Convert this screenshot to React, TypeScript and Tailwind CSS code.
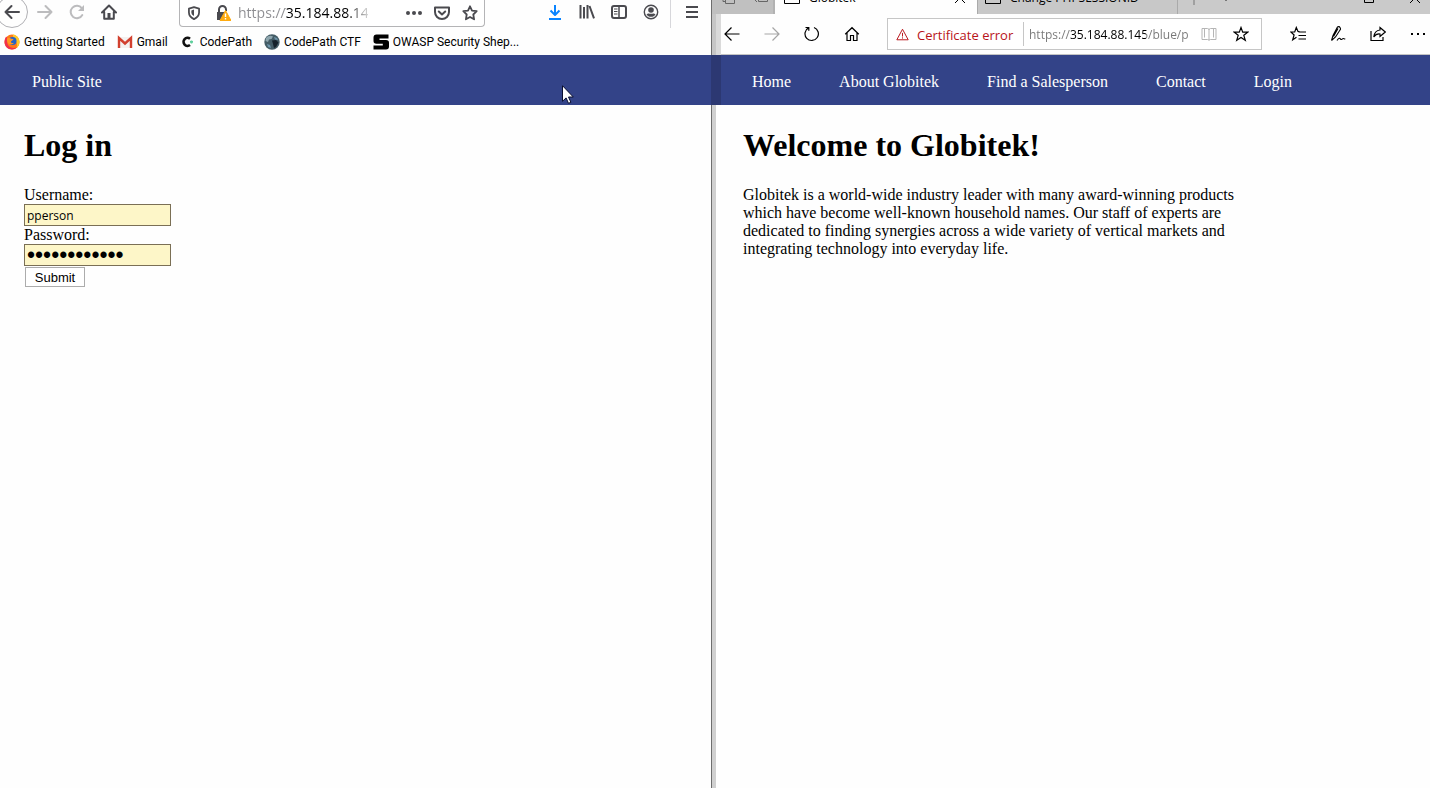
import type { ReactNode } from "react";

function Svg({ size = 16, className = "", children }: { size?: number; className?: string; children: ReactNode }) {
  return (
    <svg
      width={size}
      height={size}
      viewBox="0 0 16 16"
      fill="none"
      stroke="currentColor"
      aria-hidden="true"
      className={`shrink-0 ${className}`}
    >
      {children}
    </svg>
  );
}

function ToolButton({ label, className = "", children }: { label: string; className?: string; children: ReactNode }) {
  return (
    <button type="button" aria-label={label} className={`flex shrink-0 items-center justify-center ${className}`}>
      {children}
    </button>
  );
}

function FirefoxToolbar() {
  const tool = "h-6 w-8";
  return (
    <div className="flex h-7 items-start overflow-hidden text-[#4a4a4f]">
      <button
        type="button"
        aria-label="Back"
        className="-mt-1 -ml-1 mr-px flex h-8 w-8 shrink-0 items-center justify-center rounded-full border border-[#b0b0b4]"
      >
        <Svg>
          <path d="M15 8H1.5M7.5 2 1.5 8l6 6" strokeWidth="2" strokeLinecap="round" strokeLinejoin="round" />
        </Svg>
      </button>
      <ToolButton label="Forward" className={`${tool} text-[#bcbcbe]`}>
        <Svg>
          <path d="M1 8h13.5M8.500 2l6 6-6 6" strokeWidth="2" strokeLinecap="round" strokeLinejoin="round" />
        </Svg>
      </ToolButton>
      <ToolButton label="Reload" className={`${tool} text-[#bcbcbe]`}>
        <Svg>
          <path d="M13.300 11A6.200 6.200 0 1 1 12.800 4.200" strokeWidth="2" strokeLinecap="round" />
          <path d="M15 1v6H9z" fill="currentColor" stroke="none" />
        </Svg>
      </ToolButton>
      <ToolButton label="Home" className={tool}>
        <Svg>
          <path d="M1 8.500 8 1.500l7 7M3.200 8v6.700h9.600V8" strokeWidth="2" strokeLinecap="round" strokeLinejoin="round" />
          <path d="M6.500 9h3v6h-3z" fill="currentColor" stroke="none" />
        </Svg>
      </ToolButton>

      <div className="mx-[54px] flex h-[27px] min-w-0 flex-1 items-center rounded-b-sm border-x border-b border-[#b4b4b6] bg-white pb-px">
        <ToolButton label="Tracking protection" className="h-6 w-7">
          <Svg size={14}>
            <path d="M8 1.200 13.800 3v4.500c0 3.400-2.600 6-5.800 7.500-3.200-1.500-5.800-4.100-5.800-7.500V3z" strokeWidth="2" strokeLinejoin="round" />
            <path d="M8 4v7.500C6 10.500 5 9 5 7.500V5z" fill="currentColor" stroke="none" />
          </Svg>
        </ToolButton>
        <ToolButton label="Connection is not secure" className="h-6 w-[30px]">
          <Svg>
            <path d="M4 7V4.500a3.500 3.500 0 0 1 7 0V6" strokeWidth="2" />
            <path d="M2 7h8l-4 8H2z" fill="currentColor" stroke="none" />
            <path d="M10.500 5.500 16 15.500H5z" fill="#ffab0f" stroke="#ffab0f" strokeLinejoin="round" />
            <path d="M10.500 8.500v3.500M10.500 13v1.400" stroke="#fff" strokeWidth="1.400" />
          </Svg>
        </ToolButton>
        <input
          aria-label="Address"
          defaultValue="https://35.184.88.145"
          className="h-5 w-[130px] min-w-0 bg-[linear-gradient(to_right,#8c8c90_47px,#000_47px,#000_108px,transparent_134px)] bg-clip-text text-[14px] leading-5 text-transparent outline-none"
        />
        <div className="ml-auto flex">
          <ToolButton label="Page actions" className="h-6 w-7">
            <Svg>
              <g fill="currentColor" stroke="none">
                <circle cx="2" cy="8" r="2" />
                <circle cx="8" cy="8" r="2" />
                <circle cx="14" cy="8" r="2" />
              </g>
            </Svg>
          </ToolButton>
          <ToolButton label="Save to Pocket" className="h-6 w-7">
            <Svg>
              <path d="M1 2.500h14V7a7 7 0 0 1-14 0z" strokeWidth="2" strokeLinejoin="round" />
              <path d="m4.800 6.500 3.200 3 3.200-3" strokeWidth="2" strokeLinecap="round" strokeLinejoin="round" />
            </Svg>
          </ToolButton>
          <ToolButton label="Bookmark this page" className="h-6 w-7">
            <Svg>
              <path d="m8 1.300 2 4.300 4.700.6-3.400 3.300.8 4.800L8 12l-4.100 2.300.8-4.800L1.300 6.200 6 5.600z" strokeWidth="1.800" strokeLinejoin="round" />
            </Svg>
          </ToolButton>
        </div>
      </div>

      <ToolButton label="Downloads" className={`${tool} text-[#0a84ff]`}>
        <Svg>
          <path d="M8 1v10M3.500 6.500 8 11l4.500-4.500M2 15h12" strokeWidth="2" strokeLinejoin="round" />
        </Svg>
      </ToolButton>
      <ToolButton label="Library" className={tool}>
        <Svg>
          <path d="M1.500 1v13.500M5 3v11.500M8.500 1v13.500M10.500 2l4.500 12.300" strokeWidth="2" />
        </Svg>
      </ToolButton>
      <ToolButton label="Sidebars" className={tool}>
        <Svg>
          <rect x="1" y="2" width="14" height="12" rx="2" strokeWidth="2" />
          <path d="M8 2v12" strokeWidth="1.500" />
          <path d="M3 5h3.500M3 7.500h3.500M3 10h3.500" strokeWidth="1" />
        </Svg>
      </ToolButton>
      <ToolButton label="Account" className={tool}>
        <Svg>
          <circle cx="8" cy="8" r="6.700" strokeWidth="1.400" />
          <circle cx="8" cy="6" r="2.800" fill="currentColor" stroke="none" />
          <path d="M3.500 10.200c2-1.400 2.300-.5 4.500-.5s2.500-.9 4.500.5C11.500 12 10 12.800 8 12.800s-3.500-.8-4.500-2.600z" fill="currentColor" stroke="none" />
        </Svg>
      </ToolButton>
      <div className="mr-[5px] ml-[3px] h-7 w-px shrink-0 bg-[#d7d7db]" />
      <ToolButton label="Open menu" className={`${tool} mr-[3px]`}>
        <Svg>
          <path d="M2 3h12M2 8h12M2 13h12" strokeWidth="2" />
        </Svg>
      </ToolButton>
    </div>
  );
}

function FirefoxMark() {
  return (
    <Svg>
      <g stroke="none">
        <circle cx="8" cy="8" r="7.500" fill="#ff7a18" />
        <path d="M9 .6c4 .6 6.500 3.600 6.500 7.400 0 2.600-1.200 4.700-3 6 1-3.500.5-6-1.500-8S9 3 9 .6z" fill="#ffc928" />
        <path d="M.5 8c0 4 3 7.500 7.500 7.500 2 0 3.800-.8 5-2-4 1-7.500.2-9-2.500C2.800 8.900 3 6.500 3.500 4L2 2.800C1 4.500.5 6 .5 8z" fill="#f0304c" />
        <circle cx="8.500" cy="7" r="4" fill="#2463c9" />
        <path d="M3 4.500c1.500-1 3-.8 4 .2L9.500 5C9 6.500 7.500 6.500 7 7.500s1 2 3 1.300c-1 2-4.500 2.500-6 .2S3 5.500 3 4.500z" fill="#ff9820" />
      </g>
    </Svg>
  );
}

function GmailMark() {
  return (
    <Svg>
      <path d="M1 3h14v11H1z" fill="#f4f1f0" stroke="none" />
      <path d="M2 14V4l6 5.500L14 4v10" stroke="#d2402f" strokeWidth="2.400" />
    </Svg>
  );
}

function CodePathMark() {
  return (
    <Svg>
      <path d="M10 4.700A4 4 0 1 0 10 11" stroke="#111" strokeWidth="2.600" />
      <path d="M10 7.900h3M11.500 6.400v3" stroke="#5fcf9c" strokeWidth="1.600" />
    </Svg>
  );
}

function GlobeMark() {
  return (
    <Svg>
      <g stroke="none">
        <circle cx="8" cy="8" r="7.700" fill="#445c66" />
        <path d="M2 4C4 1.500 7 1 9 2.500L7.500 5 5 5.500 4 8 1.500 7z" fill="#8fa6ae" />
        <path d="M8 6.500 12 6l2.500 2.500L12 13l-2 1-1-4z" fill="#16222b" />
        <path d="m10 3 3 1 1 2-3-.5zM3 10l3 1 1 3-3-1z" fill="#6f96ac" />
      </g>
    </Svg>
  );
}

function ShepherdMark() {
  return (
    <Svg>
      <path d="M15.500 .5v4H6.500v1.600h6.500c2 0 3 .9 3 2.700v3.700c0 2-1 3-3 3H.5v-4h9.300V9.700H3.500c-2 0-3-.9-3-2.700V3.500c0-2 1-3 3-3z" fill="#000" stroke="none" />
    </Svg>
  );
}

const bookmarks = [
  { label: "Getting Started", mark: <FirefoxMark /> },
  { label: "Gmail", mark: <GmailMark /> },
  { label: "CodePath", mark: <CodePathMark /> },
  { label: "CodePath CTF", mark: <GlobeMark /> },
  { label: "OWASP Security Shep...", mark: <ShepherdMark /> },
];

function BookmarksBar() {
  return (
    <div className="flex h-[27px] items-center gap-3 overflow-hidden pt-px pl-1 font-['Roboto',sans-serif] text-[12px] leading-4 whitespace-nowrap text-black">
      {bookmarks.map((b) => (
        <a key={b.label} href="#" className="flex items-center gap-1">
          {b.mark}
          <span>{b.label}</span>
        </a>
      ))}
    </div>
  );
}

function LoginWindow() {
  return (
    <section className="relative flex min-w-0 flex-col bg-[#fefefe]">
      <FirefoxToolbar />
      <BookmarksBar />
      <nav className="h-[50px] bg-[#334388] pt-[18px] pl-8 font-['Liberation_Serif',serif] text-[16px] leading-[18px] text-white">
        <a href="#">Public Site</a>
      </nav>
      <main className="px-6 pt-[22px] font-['Liberation_Serif',serif] text-[16px] leading-[18px] text-black">
        <h1 className="mb-[23px] text-[32px] leading-9 font-bold">Log in</h1>
        <form className="flex flex-col items-start" onSubmit={(e) => e.preventDefault()}>
          <label htmlFor="username">Username:</label>
          <input
            id="username"
            defaultValue="pperson"
            className="h-[22px] w-[147px] border border-[#7a6f55] bg-[#fdf6c8] px-0.5 font-['Open_Sans',sans-serif] text-[12px]"
          />
          <label htmlFor="password">Password:</label>
          <input
            id="password"
            type="password"
            defaultValue="globitekuser"
            className="h-[22px] w-[147px] border border-[#7a6f55] bg-[#fdf6c8] px-0.5 font-['Liberation_Sans',sans-serif] text-[23px] leading-5"
          />
          <button
            type="submit"
            className="mt-px ml-px h-5 w-[60px] border border-[#acacac] bg-white pt-px font-['Liberation_Sans',sans-serif] text-[13px] leading-[18px]"
          >
            Submit
          </button>
        </form>
      </main>
      <svg width="12" height="19" viewBox="0 0 12 19" aria-hidden="true" className="absolute top-[85px] left-[562px]">
        <path d="M.5.7v15.600l3.600-3.400 2.400 5.400 2.400-1-2.400-5.300h4.800z" fill="#fff" stroke="#0b1030" />
      </svg>
    </section>
  );
}

function TabStrip() {
  return (
    <div className="flex h-[14px] items-end overflow-hidden bg-[#cacaca] text-[12px] leading-4 text-black">
      <div className="flex h-8 w-[63px] shrink-0 items-center gap-[17px] border-r-2 border-[#b2b2b2] bg-[#c0c0c0] pl-2 text-[#666]">
        <Svg>
          <path d="M3 3v8.500h2M5.500 5h9v8.500h-9z" />
        </Svg>
        <Svg>
          <path d="M1 9l3 3M5.500 3.500h9v8h-9z" />
        </Svg>
      </div>
      <div className="flex h-8 w-[202px] shrink-0 items-center bg-[#fefefe] pr-[9px] pl-[9px]">
        <Svg>
          <path d="M.5 2.500h15v11H.5z" />
        </Svg>
        <span className="ml-[9px]">Globitek</span>
        <button type="button" aria-label="Close tab" className="ml-auto">
          <Svg>
            <path d="m3 3 10 10M13 3 3 13" />
          </Svg>
        </button>
      </div>
      <div className="flex h-8 w-[201px] shrink-0 items-center border-x border-[#aaa] bg-[#c8c8c8] pl-[7px]">
        <Svg>
          <path d="M.5 2.500h15v11H.5z" />
        </Svg>
        <span className="ml-[9px] whitespace-nowrap">Change PHPSESSIONID</span>
      </div>
      <div className="flex h-8 flex-1 items-center pl-2 text-[#777]">
        <ToolButton label="New tab" className="mr-4 h-4 w-4">
          <Svg>
            <path d="M8 1v14M1 8h14" />
          </Svg>
        </ToolButton>
        <ToolButton label="Tab list" className="h-4 w-4">
          <Svg>
            <path d="m4 7 4 4 4-4" />
          </Svg>
        </ToolButton>
        <div className="-mr-px ml-auto flex gap-[30px] pr-2 text-black">
          <ToolButton label="Maximise" className="h-4 w-4">
            <Svg>
              <path d="M3.500 3.500h9v9h-9z" />
            </Svg>
          </ToolButton>
          <ToolButton label="Close window" className="h-4 w-4">
            <Svg>
              <path d="m3 3 10 10M13 3 3 13" />
            </Svg>
          </ToolButton>
        </div>
      </div>
    </div>
  );
}

function EdgeToolbar() {
  const tool = "h-10 w-10";
  return (
    <div className="flex h-[41px] items-center overflow-hidden border-b border-[#c4c4c4] text-black">
      <div className="flex">
        <ToolButton label="Back" className={tool}>
          <Svg>
            <path d="M15.500 8H1M7.500 1.500 1 8l6.500 6.500" strokeWidth="1.200" />
          </Svg>
        </ToolButton>
        <ToolButton label="Forward" className={`${tool} text-[#a5a5a5]`}>
          <Svg>
            <path d="M.5 8H15M8.500 1.500 15 8l-6.500 6.500" strokeWidth="1.200" />
          </Svg>
        </ToolButton>
        <ToolButton label="Refresh" className={tool}>
          <Svg>
            <path d="M10 1.500a6.700 6.700 0 1 1-5.500.4M1.500 1.500h3.300v3.300" strokeWidth="1.200" />
          </Svg>
        </ToolButton>
        <ToolButton label="Home" className={tool}>
          <Svg>
            <path d="M1.200 8.300 8 1.700l6.800 6.600M3 7v7.500h3.500v-5h3v5H13V7" strokeWidth="1.200" />
          </Svg>
        </ToolButton>
      </div>

      <div className="mr-4 ml-[15px] flex h-8 min-w-0 flex-1 items-center border border-[#c6c6c6] bg-white pl-2">
        <Svg size={13} className="text-[#b8141a]">
          <path d="M8 1.500 15 14.500H1zM8 6v4.500M8 11.500v1.500" strokeWidth="1.200" />
        </Svg>
        <span className="ml-2 w-[98px] shrink-0 pt-px text-[13px] leading-5 whitespace-nowrap text-[#b8141a]">Certificate error</span>
        <div className="mr-[5px] ml-2 h-6 w-px shrink-0 bg-[#c6c6c6]" />
        <input
          aria-label="Address"
          defaultValue="https://35.184.88.145/blue/public"
          className="mr-1 h-5 min-w-0 flex-1 bg-[linear-gradient(to_right,#777_41px,#000_41px,#000_117px,#777_117px)] bg-clip-text pt-px text-[12px] leading-5 text-transparent outline-none"
        />
        <ToolButton label="Reading view" className="h-7 w-8 text-[#b5b5b5]">
          <Svg>
            <path d="M1 2.500h5.500Q8 2.500 8 4q0-1.500 1.500-1.500H15v11H9.500Q8 13.500 8 14.500q0-1-1.500-1H1zM8 4v10M3.500 2.500v9M12.500 2.500v9" />
          </Svg>
        </ToolButton>
        <ToolButton label="Add to favourites" className="mr-1 h-7 w-8">
          <Svg>
            <path d="m8 1.500 1.700 4.700h5L10.800 9.300l1.500 5L8 11.400l-4.300 2.900 1.500-5L1.300 6.200h5z" strokeWidth="1.200" />
          </Svg>
        </ToolButton>
      </div>

      <ToolButton label="Favourites" className={tool}>
        <Svg>
          <path d="M9.500 5.500H8L6.300 1.500 4.700 6H.8l3.300 3-1.400 4.800 3.800-2.600M8.500 6H16M8.500 9.500H16M8.500 13H16" strokeWidth="1.200" />
        </Svg>
      </ToolButton>
      <ToolButton label="Make a web note" className={tool}>
        <Svg>
          <path d="M1.500 14.500 3 9.500 7.500 1q1.500-1 2.500.5t0 2.500L5.500 11l-4 3.500M8 2.500 3.500 10.500M7 14.500c2-3 3-2.500 3.500-1.500s1.500.5 2-.2 1.300 0 2.800.2" strokeWidth="1.100" />
        </Svg>
      </ToolButton>
      <ToolButton label="Share" className={tool}>
        <Svg>
          <path d="M1 5v9.500h12V11" strokeWidth="1.200" />
          <path d="M10 1.500 15.300 6 10 10.500V8Q6 7.500 3.800 11 4.500 4.500 10 4z" strokeWidth="1.200" />
        </Svg>
      </ToolButton>
      <ToolButton label="More" className={`${tool} -mr-2`}>
        <Svg>
          <path d="M1 7h2v2H1zM7 7h2v2H7zM13 7h2v2h-2z" fill="currentColor" stroke="none" />
        </Svg>
      </ToolButton>
    </div>
  );
}

const siteLinks = ["Home", "About Globitek", "Find a Salesperson", "Contact", "Login"];

function SiteWindow() {
  return (
    <section className="relative flex min-w-0 flex-col border-l border-[#6e6e6e] bg-[#fefefe]">
      <TabStrip />
      <EdgeToolbar />
      <div className="absolute top-[14px] left-0 h-[41px] w-[9px] bg-[linear-gradient(to_right,#c6c6c6_4px,#dadada_4px)]" />
      <nav className="-ml-px flex h-[50px] gap-12 bg-[#334388] pt-[18px] pl-[41px] font-['Liberation_Serif',serif] text-[16px] leading-[18px] whitespace-nowrap text-white">
        {siteLinks.map((label) => (
          <a key={label} href="#">
            {label}
          </a>
        ))}
      </nav>
      <div className="absolute top-[55px] -left-px h-[50px] w-[10px] bg-[#2c3872]" />
      <div className="flex flex-1">
        <div className="w-1 shrink-0 bg-[#d0d0d0]" />
        <main className="pt-[22px] pr-6 pl-[27px] font-['Liberation_Serif',serif] text-[16px] leading-[18px] text-black">
          <h1 className="mb-[23px] text-[32px] leading-9 font-bold">Welcome to Globitek!</h1>
          <p className="max-w-[500px]">
            Globitek is a world-wide industry leader with many award-winning products which have become well-known
            household names. Our staff of experts are dedicated to finding synergies across a wide variety of vertical
            markets and integrating technology into everyday life.
          </p>
        </main>
      </div>
    </section>
  );
}

export default function App() {
  return (
    <div className="grid min-h-screen grid-cols-[711fr_719fr] overflow-hidden bg-[#fefefe] font-['Open_Sans',sans-serif]">
      <LoginWindow />
      <SiteWindow />
    </div>
  );
}
